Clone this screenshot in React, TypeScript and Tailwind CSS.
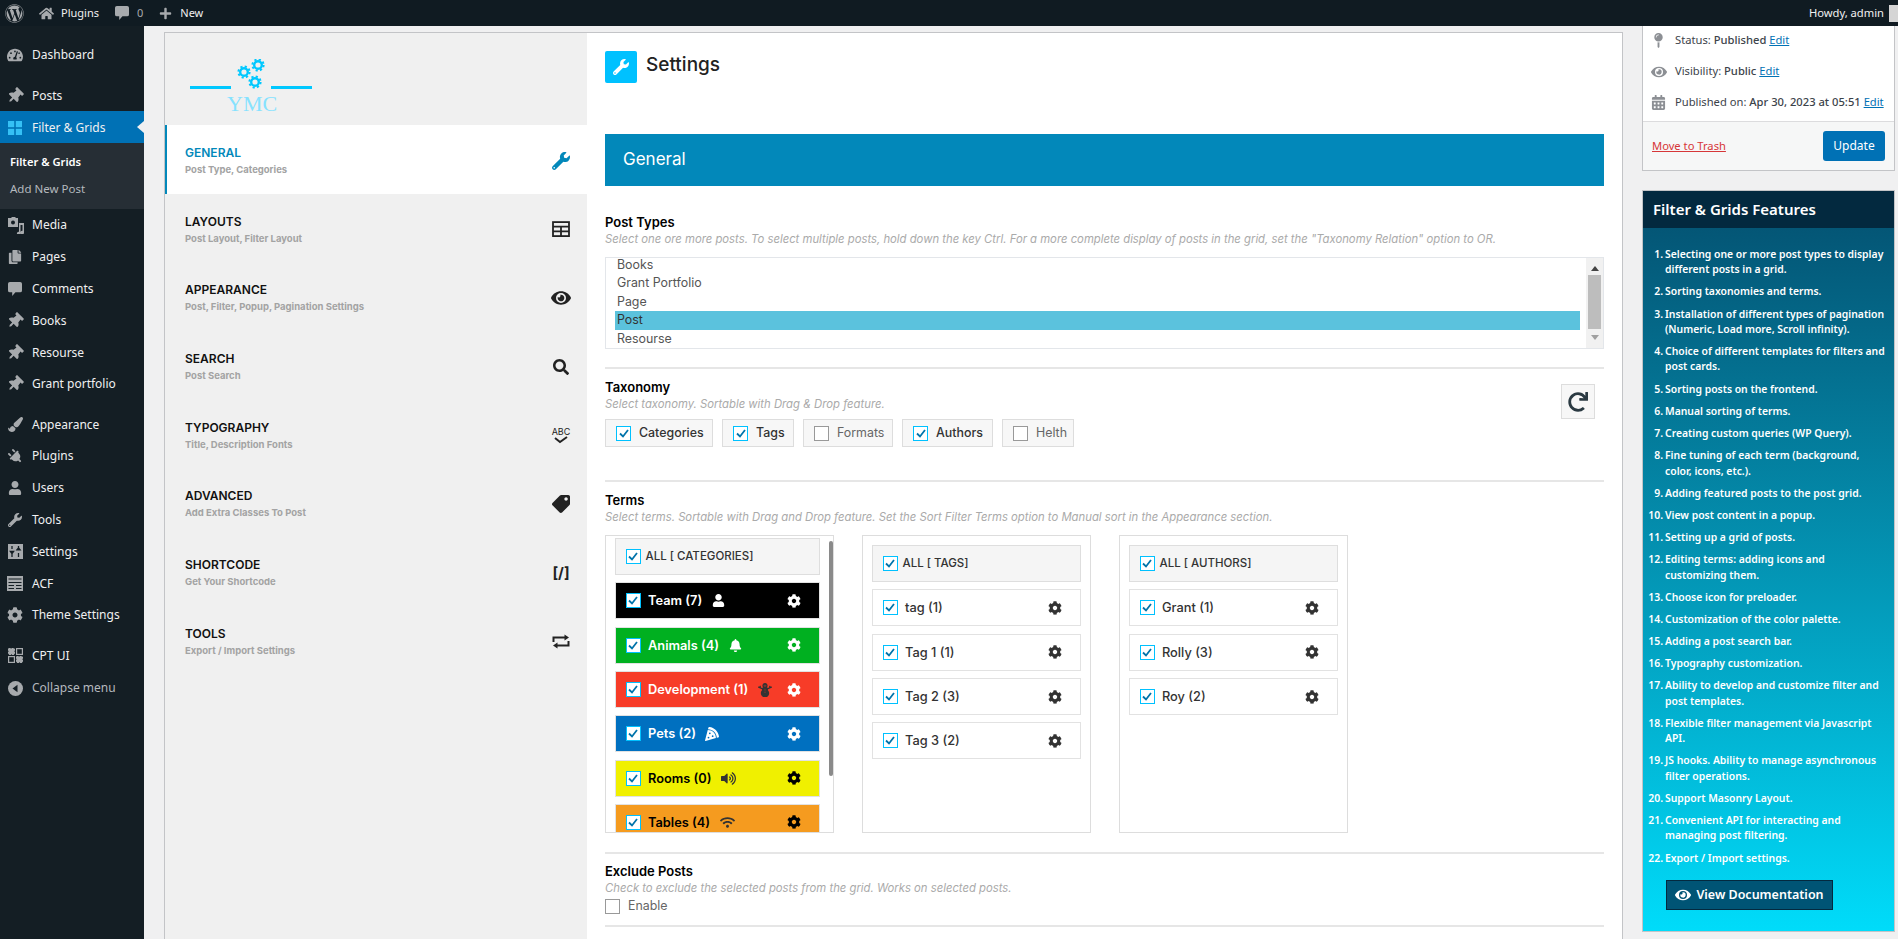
import type { ReactNode } from 'react';
import {
  FaWordpress, FaHome, FaPlus, FaTachometerAlt, FaThumbtack, FaCopy, FaPaintBrush, FaPlug, FaUser, FaWrench, FaCog,
  FaEye, FaSearch, FaTag, FaRedo, FaBell, FaSnowman, FaPizzaSlice, FaVolumeUp, FaWifi, FaMapPin, FaCalendarAlt,
} from 'react-icons/fa';

const segoe = "font-['Noto_Sans',sans-serif]";

function BubbleIcon({ size = 15 }: { size?: number }) {
  return (
    <svg width={size} height={size} viewBox="0 0 15 15" fill="#a7aaad">
      <path d="M2 0h11a2 2 0 0 1 2 2v7a2 2 0 0 1-2 2H8l-3.5 4v-4H2a2 2 0 0 1-2-2V2a2 2 0 0 1 2-2z" />
    </svg>
  );
}

function GridIcon() {
  return (
    <svg width="14" height="14" viewBox="0 0 14 14" fill="#35c0f5">
      <rect x="0" y="0" width="6.2" height="6.2" />
      <rect x="7.8" y="0" width="6.2" height="6.2" />
      <rect x="0" y="7.8" width="6.2" height="6.2" />
      <rect x="7.8" y="7.8" width="6.2" height="6.2" />
    </svg>
  );
}

function MediaIcon() {
  return (
    <svg width="17" height="17" viewBox="0 0 17 17" fill="#a7aaad">
      <path d="M1 1h3l1-1h3l1 1h2v9H1z" />
      <circle cx="6" cy="5.5" r="2" fill="#141e24" />
      <path d="M12 6h5v9.5a1.8 1.8 0 1 1-1.5-1.7V8h-2v8.5a1.8 1.8 0 1 1-1.5-1.7z" />
    </svg>
  );
}

function SlidersIcon() {
  return (
    <svg width="15" height="15" viewBox="0 0 15 15">
      <rect width="15" height="15" fill="#a7aaad" />
      <path d="M4 2v3M4 9v4M2.4 7.5h3.2L4 9.6zM10.5 2v4M10.5 9v4M8.9 5.8h3.2L10.5 3.8z" stroke="#141e24" strokeWidth="1.3" fill="none" />
    </svg>
  );
}

function AcfIcon() {
  return (
    <svg width="16" height="15" viewBox="0 0 16 15" fill="none">
      <rect width="16" height="15" fill="#a7aaad" />
      <path d="M1.5 3h13M1.5 6.5h13M1.5 9.5h5.5M9 9.5h5.5M1.5 12.5h5.5M9 12.5h5.5" stroke="#141e24" strokeWidth="1.2" />
    </svg>
  );
}

function CptIcon() {
  return (
    <svg width="15" height="15" viewBox="0 0 15 15" fill="none" stroke="#a7aaad" strokeWidth="1.2">
      <rect x="0.6" y="0.6" width="5.8" height="5.8" fill="#a7aaad" strokeDasharray="2 1" />
      <rect x="8.6" y="0.6" width="5.8" height="5.8" />
      <rect x="0.6" y="8.6" width="5.8" height="5.8" />
      <rect x="8.6" y="8.6" width="5.8" height="5.8" fill="#a7aaad" strokeDasharray="2 1" />
    </svg>
  );
}

function CollapseIcon() {
  return (
    <svg width="15" height="15" viewBox="0 0 15 15">
      <circle cx="7.5" cy="7.5" r="7.5" fill="#a7aaad" />
      <path d="M9.5 3.8v7.4L4.5 7.5z" fill="#141e24" />
    </svg>
  );
}

function MenuRow({ icon, label, active, muted }: { icon: ReactNode; label: string; active?: boolean; muted?: boolean }) {
  return (
    <div className={`relative flex h-[31.8px] items-center pt-[2px] ${active ? 'bg-[#0071b5]' : ''}`}>
      <div className={`flex w-[32px] shrink-0 items-center justify-center pr-[2px] ${active ? 'text-white' : 'text-[#a7aaad]'}`}>{icon}</div>
      <span className={`text-[12px] ${muted ? 'text-[#b4b9be]' : 'text-[#f0f0f1]'}`}>{label}</span>
      {active && (
        <svg className="absolute top-[10px] right-0" width="7" height="12" viewBox="0 0 7 12">
          <path d="M7 0v12L0 6z" fill="#f0f0f1" />
        </svg>
      )}
    </div>
  );
}

function Sidebar() {
  const pin = <FaThumbtack size={16} className="rotate-45" />;
  return (
    <aside className={`w-[144px] shrink-0 bg-[#141e24] pt-[12px] ${segoe}`}>
      <MenuRow icon={<FaTachometerAlt size={16} />} label="Dashboard" />
      <div className="mt-[9.2px]">
        <MenuRow icon={pin} label="Posts" />
      </div>
      <MenuRow icon={<GridIcon />} label="Filter & Grids" active />
      <div className="h-[66px] bg-[#262e35] pt-[6px] pl-[10px] text-[11.5px]">
        <div className="flex h-[27px] items-center text-[11.2px] font-semibold text-white">Filter &amp; Grids</div>
        <div className="flex h-[27px] items-center text-[#b4b9be]">Add New Post</div>
      </div>
      <MenuRow icon={<MediaIcon />} label="Media" />
      <MenuRow icon={<FaCopy size={14} />} label="Pages" />
      <MenuRow icon={<BubbleIcon size={14} />} label="Comments" />
      <MenuRow icon={pin} label="Books" />
      <MenuRow icon={pin} label="Resourse" />
      <MenuRow icon={pin} label="Grant portfolio" />
      <div className="mt-[8.3px]">
        <MenuRow icon={<FaPaintBrush size={15} />} label="Appearance" />
        <MenuRow icon={<FaPlug size={15} className="-rotate-45" />} label="Plugins" />
        <MenuRow icon={<FaUser size={14} />} label="Users" />
        <MenuRow icon={<FaWrench size={14} />} label="Tools" />
        <MenuRow icon={<SlidersIcon />} label="Settings" />
        <MenuRow icon={<AcfIcon />} label="ACF" />
        <MenuRow icon={<FaCog size={16} />} label="Theme Settings" />
      </div>
      <div className="mt-[8.4px]">
        <MenuRow icon={<CptIcon />} label="CPT UI" />
      </div>
      <div className="mt-[1px]">
        <MenuRow icon={<CollapseIcon />} label="Collapse menu" muted />
      </div>
    </aside>
  );
}

function TopBar() {
  return (
    <header className={`flex h-[26px] shrink-0 items-center bg-[#101b22] pl-[5px] text-[11px] text-[#f0f0f1] ${segoe}`}>
      <FaWordpress size={19} className="text-[#a7aaad]" />
      <FaHome size={15} className="ml-[15px] text-[#a7aaad]" />
      <span className="ml-[7px]">Plugins</span>
      <span className="ml-[16px] flex">
        <BubbleIcon size={14} />
      </span>
      <span className="ml-[8px] text-[#a7aaad]">0</span>
      <FaPlus size={13} className="ml-[16px] text-[#a7aaad]" />
      <span className="ml-[8px]">New</span>
      <span className="ml-auto text-[11.2px]">Howdy, admin</span>
      <div className="ml-[5px] h-[17px] w-[9px] bg-[#d5d5d5]" />
    </header>
  );
}

function TableIcon({ size = 18 }: { size?: number }) {
  return (
    <svg width={size} height={size * 0.9} viewBox="0 0 18 16" fill="none" stroke="#222" strokeWidth="1.8">
      <rect x="1" y="1" width="16" height="14" />
      <path d="M1 5.5h16M1 10.2h16M9 5.5V15" />
    </svg>
  );
}

function SwapIcon() {
  return (
    <svg width="18" height="15" viewBox="0 0 18 15" fill="none" stroke="#222" strokeWidth="2">
      <path d="M1.5 8V3.5H14M16.5 7v4.5H4" />
      <path d="M12.5 0.5l4.5 3-4.5 3zM5.5 8.5l-4.5 3 4.5 3z" fill="#222" stroke="none" />
    </svg>
  );
}

const navItems: { title: string; sub: string; icon: ReactNode }[] = [
  { title: 'GENERAL', sub: 'Post Type, Categories', icon: <FaWrench size={18} /> },
  { title: 'LAYOUTS', sub: 'Post Layout, Filter Layout', icon: <TableIcon /> },
  { title: 'APPEARANCE', sub: 'Post, Filter, Popup, Pagination Settings', icon: <FaEye size={20} /> },
  { title: 'SEARCH', sub: 'Post Search', icon: <FaSearch size={16} /> },
  {
    title: 'TYPOGRAPHY',
    sub: 'Title, Description Fonts',
    icon: (
      <div className="flex flex-col items-center">
        <span className="text-[9px] leading-[9px] text-[#222]">ABC</span>
        <svg width="14" height="8" viewBox="0 0 14 8" fill="none" stroke="#222" strokeWidth="2">
          <path d="M1 2l5 4 7-5" />
        </svg>
      </div>
    ),
  },
  { title: 'ADVANCED', sub: 'Add Extra Classes To Post', icon: <FaTag size={18} className="-scale-x-100" /> },
  { title: 'SHORTCODE', sub: 'Get Your Shortcode', icon: <span className="text-[15px] font-bold text-[#222]">[/]</span> },
  { title: 'TOOLS', sub: 'Export / Import Settings', icon: <SwapIcon /> },
];

function YmcLogo() {
  return (
    <div className="flex h-[92px] flex-col pt-[26px] pl-[25px]">
      <svg width="122" height="32" viewBox="0 0 122 32" fill="none" stroke="#00c8ff">
        <path d="M0 28.5h41M81 28.5h41" strokeWidth="3" />
        {[
          [54, 13],
          [68, 6],
          [65, 23],
        ].map(([cx, cy]) => (
          <g key={cx}>
            <circle cx={cx} cy={cy} r="3.8" strokeWidth="2.4" />
            <circle cx={cx} cy={cy} r="5.6" strokeWidth="2" strokeDasharray="2.2 2.2" />
          </g>
        ))}
      </svg>
      <div className="mt-[-1px] ml-[37px] font-['Liberation_Serif',serif] text-[22px] leading-[28px] font-normal text-[#86e2ff]">YMC</div>
    </div>
  );
}

function SideNav() {
  return (
    <nav className="w-[422px] shrink-0 bg-[#f0f0f0]">
      <YmcLogo />
      {navItems.map((item, i) => (
        <div
          key={item.title}
          className={
            i === 0
              ? 'flex h-[68.7px] items-center justify-between border-l-2 border-[#0288ba] bg-white pt-[3px] pr-[16px] pl-[18px]'
              : 'flex h-[68.7px] items-center justify-between pt-[3px] pr-[16px] pl-[20px]'
          }
        >
          <div className="mt-[2px]">
            <div className={`text-[12px] leading-[16px] font-semibold ${i === 0 ? 'text-[#0288ba]' : 'text-[#111]'}`}>{item.title}</div>
            <div className="text-[9.5px] leading-[18px] font-bold text-[#a3a3a3]">{item.sub}</div>
          </div>
          <div className={`flex w-[20px] justify-center ${i === 0 ? 'text-[#0288ba]' : 'text-[#222]'}`}>{item.icon}</div>
        </div>
      ))}
    </nav>
  );
}

function Check({ on = true }: { on?: boolean }) {
  return (
    <span className={`flex h-[15px] w-[15px] shrink-0 items-center justify-center border-[1.5px] bg-white ${on ? 'border-[#00c1ff]' : 'border-[#999]'}`}>
      {on && (
        <svg width="10" height="9" viewBox="0 0 10 9" fill="none" stroke="#0073aa" strokeWidth="1.8">
          <path d="M1 4.5l3 3 5-6.5" />
        </svg>
      )}
    </span>
  );
}

function Heading({ title, desc }: { title: string; desc: string }) {
  return (
    <>
      <h3 className="h-[17px] text-[13px] leading-[17px] font-semibold whitespace-nowrap text-black">{title}</h3>
      <p className="h-[16px] text-[11.3px] leading-[16px] whitespace-nowrap text-[#aaa] italic">{desc}</p>
    </>
  );
}

function Separator({ className }: { className: string }) {
  return <div className={`h-[2px] w-full bg-[#e6e6e6] ${className}`} />;
}

const postTypes = ['Books', 'Grant Portfolio', 'Page', 'Post', 'Resourse'];

function PostTypeList() {
  return (
    <div className="mt-[10px] flex h-[92px] w-[999px] overflow-hidden border border-[#e3e6ea]">
      <div className="-mt-[2px] flex-1 pl-[9px] text-[12.4px] text-[#555]">
        {postTypes.map((p) => (
          <div key={p} className={`flex h-[18.5px] items-center pl-[2px] ${p === 'Post' ? 'mr-[6px] bg-[#5bc2dd] text-[#333]' : ''}`}>
            {p}
          </div>
        ))}
      </div>
      <div className="flex w-[17px] flex-col items-center bg-[#f1f1f1] pt-[8px]">
        <svg width="8" height="5" viewBox="0 0 8 5"><path d="M4 0l4 5H0z" fill="#444" /></svg>
        <div className="mt-[4px] h-[54px] w-[13px] bg-[#bdbdbd]" />
        <svg className="mt-[6px]" width="8" height="5" viewBox="0 0 8 5"><path d="M4 5L0 0h8z" fill="#a0a0a0" /></svg>
      </div>
    </div>
  );
}

const taxonomies = [
  { label: 'Categories', on: true, w: 'w-[108px]' },
  { label: 'Tags', on: true, w: 'w-[72px]' },
  { label: 'Formats', on: false, w: 'w-[90px]' },
  { label: 'Authors', on: true, w: 'w-[91px]' },
  { label: 'Helth', on: false, w: 'w-[72px]' },
];

function TaxonomyChips() {
  return (
    <div className="mt-[7.5px] flex gap-[9px]">
      {taxonomies.map((t) => (
        <div key={t.label} className={`flex h-[28px] items-center gap-[8px] border-[1.5px] border-[#ddd] bg-[#f7f7f7] pl-[10px] text-[12.4px] ${t.w} ${t.on ? 'font-medium text-[#333]' : 'text-[#666]'}`}>
          <Check on={t.on} />
          {t.label}
        </div>
      ))}
    </div>
  );
}

type Term = { label: string; bg?: string; fg?: string; icon?: ReactNode };

const categories: Term[] = [
  { label: 'Team (7)', bg: 'bg-black', fg: 'text-white', icon: <FaUser size={13} /> },
  { label: 'Animals (4)', bg: 'bg-[#00b020]', fg: 'text-white', icon: <FaBell size={13} /> },
  { label: 'Development (1)', bg: 'bg-[#f73c28]', fg: 'text-white', icon: <FaSnowman size={14} className="text-[#333]" /> },
  { label: 'Pets (2)', bg: 'bg-[#0070c0]', fg: 'text-white', icon: <FaPizzaSlice size={14} /> },
  { label: 'Rooms (0)', bg: 'bg-[#f0f000]', fg: 'text-black', icon: <FaVolumeUp size={15} className="text-[#333]" /> },
  { label: 'Tables (4)', bg: 'bg-[#f59b1f]', fg: 'text-black', icon: <FaWifi size={15} className="text-[#333]" /> },
];

function TermRow({ term }: { term: Term }) {
  return (
    <div className={`mt-[7.3px] flex h-[37px] shrink-0 items-center gap-[7.5px] border border-[#e2e2e2] pr-[18px] pl-[9.5px] text-[12.8px] font-medium ${term.bg ?? 'bg-white'} ${term.fg ?? 'text-[#333]'}`}>
      <Check />
      <span className={term.bg ? 'font-semibold' : ''}>{term.label}</span>
      {term.icon && <span className="ml-[2px] flex">{term.icon}</span>}
      <FaCog size={14} className="ml-auto" />
    </div>
  );
}

function AllRow({ label }: { label: string }) {
  return (
    <div className="flex h-[37px] shrink-0 items-center gap-[5px] border border-[#dedede] bg-[#f5f5f5] pl-[9.5px] text-[11.5px] font-medium text-[#333]">
      <Check />
      {label}
    </div>
  );
}

function TermColumn({ all, terms }: { all: string; terms: Term[] }) {
  return (
    <div className="h-[298px] w-[229px] border border-[#ddd] px-[9px] pt-[9px]">
      <AllRow label={all} />
      {terms.map((t) => (
        <TermRow key={t.label} term={t} />
      ))}
    </div>
  );
}

function CategoryColumn() {
  return (
    <div className="flex h-[298px] w-[229px] overflow-hidden border border-[#ddd] pt-[2px] pl-[9px]">
      <div className="w-[205px] shrink-0">
        <AllRow label="ALL [ CATEGORIES]" />
        {categories.map((t) => (
          <TermRow key={t.label} term={t} />
        ))}
      </div>
      <div className="mt-[3px] ml-[9px] h-[235px] w-[4px] rounded-full bg-[#8a8a8a]" />
    </div>
  );
}

function SettingsPane() {
  return (
    <div className="flex-1 px-[18px] pt-[18px]">
      <div className="flex h-[32px] items-center gap-[9px]">
        <div className="flex h-[32px] w-[32px] items-center justify-center rounded-[2px] bg-[#00c1ff] text-white">
          <FaWrench size={16} />
        </div>
        <h1 className="-mt-[3px] text-[19px] font-medium text-[#222]">Settings</h1>
      </div>
      <div className="mt-[51px] flex h-[52px] items-center bg-[#0288ba] pl-[18px] text-[17px] text-white">General</div>

      <div className="mt-[27.7px]">
        <Heading
          title="Post Types"
          desc='Select one ore more posts. To select multiple posts, hold down the key Ctrl. For a more complete display of posts in the grid, set the "Taxonomy Relation" option to OR.'
        />
      </div>
      <PostTypeList />
      <Separator className="mt-[18px]" />

      <div className="mt-[10px] flex items-start justify-between">
        <div>
          <Heading title="Taxonomy" desc="Select taxonomy. Sortable with Drag & Drop feature." />
          <TaxonomyChips />
        </div>
        <button className="mt-[5.5px] mr-[9px] flex h-[35px] w-[34px] items-center justify-center border-[1.5px] border-[#ddd] bg-[#f7f7f7] text-[#2b3a42]">
          <FaRedo size={20} />
        </button>
      </div>
      <Separator className="mt-[33px]" />

      <div className="mt-[9.5px]">
        <Heading title="Terms" desc="Select terms. Sortable with Drag and Drop feature. Set the Sort Filter Terms option to Manual sort in the Appearance section." />
      </div>
      <div className="mt-[10.5px] flex gap-[28px]">
        <CategoryColumn />
        <TermColumn all="ALL [ TAGS]" terms={[{ label: 'tag (1)' }, { label: 'Tag 1 (1)' }, { label: 'Tag 2 (3)' }, { label: 'Tag 3 (2)' }]} />
        <TermColumn all="ALL [ AUTHORS]" terms={[{ label: 'Grant (1)' }, { label: 'Rolly (3)' }, { label: 'Roy (2)' }]} />
      </div>
      <Separator className="mt-[18.5px]" />

      <div className="mt-[9px]">
        <Heading title="Exclude Posts" desc="Check to exclude the selected posts from the grid. Works on selected posts." />
      </div>
      <div className="mt-[3px] flex h-[15px] items-center gap-[8px] text-[12.4px] text-[#666]">
        <Check on={false} />
        Enable
      </div>
      <Separator className="mt-[11px]" />
    </div>
  );
}

function MetaRow({ icon, children }: { icon: ReactNode; children: ReactNode }) {
  return (
    <div className="flex h-[31px] items-center pb-[2px]">
      <div className="flex w-[25px] justify-center pl-[6px] text-[#8c8f94]">{icon}</div>
      <div className="ml-[7px] whitespace-nowrap">{children}</div>
    </div>
  );
}

const EditLink = () => <span className="text-[#0071b5] underline">Edit</span>;

function PublishBox() {
  return (
    <div className="border-x border-b border-[#c3c4c7] bg-white text-[11.2px] text-[#3c434a]">
      <div className="pb-[1px]">
        <MetaRow icon={<FaMapPin size={15} />}>
          Status: <span className="font-medium">Published</span> <EditLink />
        </MetaRow>
        <MetaRow icon={<FaEye size={16} />}>
          Visibility: <span className="font-medium">Public</span> <EditLink />
        </MetaRow>
        <MetaRow icon={<FaCalendarAlt size={15} />}>
          Published on: <span className="font-medium">Apr 30, 2023 at 05:51</span> <EditLink />
        </MetaRow>
      </div>
      <div className="mt-[1px] flex h-[49px] items-center justify-between border-t border-[#dcdcde] bg-[#f6f7f7] px-[9px]">
        <span className="text-[#d63638] underline">Move to Trash</span>
        <button className="h-[30px] w-[62px] rounded-[3px] bg-[#0071b5] text-[12px] text-white">Update</button>
      </div>
    </div>
  );
}

const features = [
  'Selecting one or more post types to display\ndifferent posts in a grid.',
  'Sorting taxonomies and terms.',
  'Installation of different types of pagination\n(Numeric, Load more, Scroll infinity).',
  'Choice of different templates for filters and\npost cards.',
  'Sorting posts on the frontend.',
  'Manual sorting of terms.',
  'Creating custom queries (WP Query).',
  'Fine tuning of each term (background,\ncolor, icons, etc.).',
  'Adding featured posts to the post grid.',
  'View post content in a popup.',
  'Setting up a grid of posts.',
  'Editing terms: adding icons and\ncustomizing them.',
  'Choose icon for preloader.',
  'Customization of the color palette.',
  'Adding a post search bar.',
  'Typography customization.',
  'Ability to develop and customize filter and\npost templates.',
  'Flexible filter management via Javascript\nAPI.',
  'JS hooks. Ability to manage asynchronous\nfilter operations.',
  'Support Masonry Layout.',
  'Convenient API for interacting and\nmanaging post filtering.',
  'Export / Import settings.',
];

function FeaturesBox() {
  return (
    <div className="mt-[19px] h-[742px] border border-[#c3c4c7]">
      <div className="flex h-[37px] items-center bg-[#03293f] pl-[10px] text-[15px] font-semibold text-white">Filter &amp; Grids Features</div>
      <div className="h-[703px] bg-linear-to-b from-[#045676] to-[#00dcfa] pt-[19px] pl-[5px]">
        <ol>
          {features.map((f, i) => (
            <li key={f} className="mb-[6.9px] flex text-[10.4px] leading-[15.3px] font-semibold whitespace-nowrap text-white">
              <span className="w-[15px] shrink-0 text-right">{i + 1}.</span>
              <span className="ml-[2px] whitespace-pre-line">{f}</span>
            </li>
          ))}
        </ol>
        <button className="mt-[14px] ml-[18px] flex h-[30px] w-[167px] items-center justify-center gap-[5px] border border-[#03293f] bg-[#005475] text-[12.5px] font-semibold text-white">
          <FaEye size={16} />
          View Documentation
        </button>
      </div>
    </div>
  );
}

export default function App() {
  return (
    <div className="flex h-[939px] w-[1898px] flex-col overflow-hidden bg-[#f0f0f1] font-['Inter',sans-serif]">
      <TopBar />
      <div className="flex min-h-0 flex-1">
        <Sidebar />
        <div className="ml-[20px] flex min-w-0 flex-1">
          <main className="mt-[6px] flex h-[1000px] w-[1459px] shrink-0 border border-[#c3c4c7] bg-white">
            <SideNav />
            <SettingsPane />
          </main>
          <aside className={`ml-[19px] w-[253px] shrink-0 text-[12px] ${segoe}`}>
            <PublishBox />
            <FeaturesBox />
          </aside>
        </div>
      </div>
    </div>
  );
}
